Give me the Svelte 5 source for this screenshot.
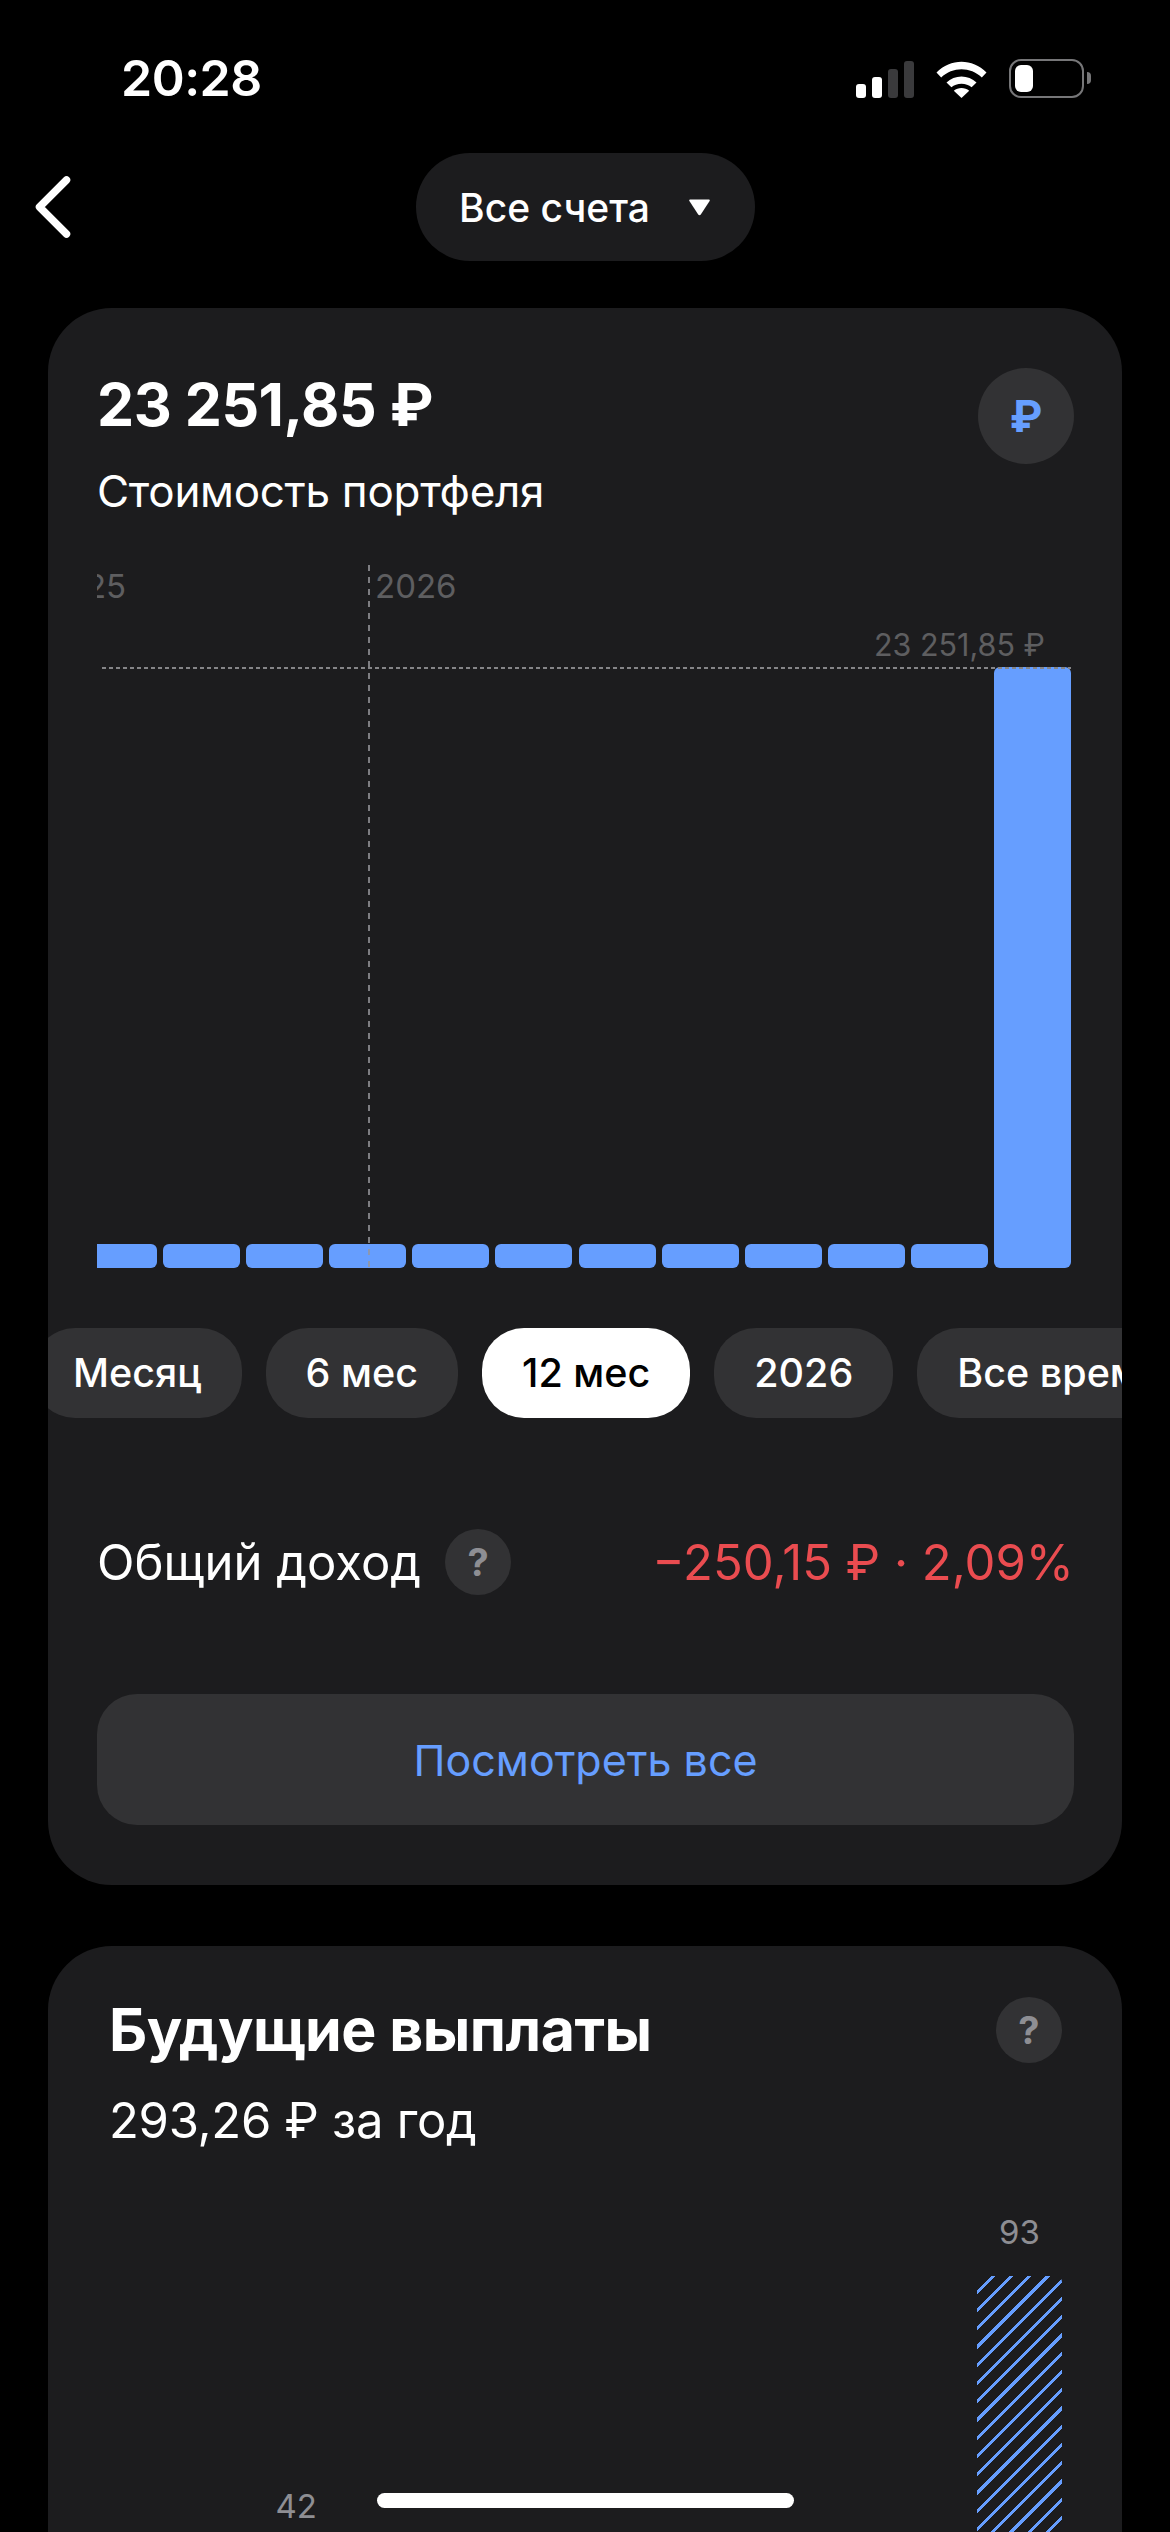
<script>
  const bars = [24, 24, 24, 24, 24, 24, 24, 24, 24, 24, 24, 601];
  const periods = ["Месяц", "6 мес", "12 мес", "2026", "Все время"];
  const activePeriod = "12 мес";
  const payouts = [null, 42, null, null, null, null, 93];
  const payoutScale = 5.37;
</script>

<div class="screen">
  <header class="status">
    <span class="time">20:28</span>
    <div class="status-icons">
      <div class="signal">
        <i class="on s1"></i>
        <i class="on s2"></i>
        <i class="s3"></i>
        <i class="s4"></i>
      </div>
      <svg class="wifi" width="51" height="37" viewBox="0 0 51 37" aria-hidden="true">
        <path d="M0.5 11.5C14.5 -3 36.5 -3 50.5 11.5L45.8 16.5C34.5 5.5 16.5 5.5 5.2 16.5Z" fill="#fff" />
        <path d="M10.5 21.5C18.5 13.5 32.5 13.5 40.5 21.5L35.6 26.3C30.5 21.5 20.5 21.5 15.4 26.3Z" fill="#fff" />
        <path d="M25.5 37L17.8 29.8C22 26 29 26 33.2 29.8Z" fill="#fff" />
      </svg>
      <div class="battery">
        <div class="battery-body"><div class="battery-fill"></div></div>
        <div class="battery-nub"></div>
      </div>
    </div>
  </header>

  <nav class="topbar">
    <svg class="back" width="36" height="62" viewBox="0 0 36 62" aria-hidden="true">
      <path d="M31.5 4L4.5 31L31.5 58" fill="none" stroke="#fff" stroke-width="7.5" stroke-linecap="round" stroke-linejoin="round" />
    </svg>
    <button class="accounts" type="button">
      <span>Все счета</span>
      <svg width="23" height="18" viewBox="0 0 23 18" aria-hidden="true">
        <path d="M2 1.5H21Q22.5 1.5 21.6 3L12.8 16.5Q11.5 18 10.2 16.5L1.4 3Q0.5 1.5 2 1.5Z" fill="#fff" />
      </svg>
    </button>
  </nav>

  <section class="card portfolio">
    <div class="portfolio-head">
      <div>
        <h1>23 251,85 ₽</h1>
        <p class="subtitle">Стоимость портфеля</p>
      </div>
      <div class="currency">₽</div>
    </div>

    <div class="chart">
      <span class="year old">2025</span>
      <span class="year current">2026</span>
      <span class="year-line"></span>
      <span class="max-label">23 251,85 ₽</span>
      <span class="max-line"></span>
      <div class="bars">
        {#each bars as height}
          <div class="bar" style="height: {height}px"></div>
        {/each}
      </div>
    </div>

    <div class="periods">
      <div class="period-row">
        {#each periods as period}
          <button class="chip" class:active={period === activePeriod} type="button">{period}</button>
        {/each}
      </div>
    </div>

    <div class="income">
      <div class="income-label">
        <span>Общий доход</span>
        <span class="help">?</span>
      </div>
      <span class="income-value">−250,15 ₽ · 2,09%</span>
    </div>

    <button class="view-all" type="button">Посмотреть все</button>
  </section>

  <section class="card future">
    <div class="future-head">
      <div>
        <h2>Будущие выплаты</h2>
        <p class="subtitle">293,26 ₽ за год</p>
      </div>
      <span class="help">?</span>
    </div>

    <div class="payouts">
      {#each payouts as value}
        <div class="payout">
          {#if value !== null}
            <span class="payout-value">{value}</span>
            <div class="hatch" style="height: {value * payoutScale}px"></div>
          {/if}
        </div>
      {/each}
    </div>
  </section>

  <div class="home-indicator"></div>
</div>

<style>
  :global(body) {
    margin: 0;
    background: #000;
  }

  .screen {
    position: relative;
    width: 1170px;
    height: 2532px;
    overflow: hidden;
    background: #000;
    color: #fff;
    font-family: Inter, "Noto Sans", sans-serif;
  }

  h1,
  h2,
  p {
    margin: 0;
  }

  button {
    border: 0;
    font: inherit;
    color: inherit;
    cursor: pointer;
  }

  .status {
    display: flex;
    justify-content: space-between;
    align-items: center;
    height: 58px;
    padding: 49px 79px 0 121px;
  }

  .time {
    font-size: 50px;
    font-weight: 600;
    letter-spacing: -0.5px;
  }

  .status-icons {
    display: flex;
    align-items: flex-end;
  }

  .signal {
    display: flex;
    align-items: flex-end;
    gap: 6px;
    height: 37px;
    margin-right: 22px;
  }

  .signal i {
    display: block;
    width: 10px;
    border-radius: 3px;
    background: #3a3a3c;
  }

  .signal i.on {
    background: #fff;
  }

  .s1 { height: 14px; }
  .s2 { height: 21px; }
  .s3 { height: 29px; }
  .s4 { height: 37px; }

  .wifi {
    margin-right: 22px;
  }

  .battery {
    display: flex;
    align-items: center;
    gap: 3px;
  }

  .battery-body {
    box-sizing: border-box;
    width: 75px;
    height: 39px;
    padding: 4px;
    border: 2.5px solid #767678;
    border-radius: 12px;
  }

  .battery-fill {
    width: 18px;
    height: 100%;
    border-radius: 6px;
    background: #fff;
  }

  .battery-nub {
    width: 4px;
    height: 12px;
    border-radius: 0 4px 4px 0;
    background: #767678;
  }

  .topbar {
    position: relative;
    display: flex;
    justify-content: center;
    margin-top: 46px;
  }

  .back {
    position: absolute;
    left: 35px;
    top: 23px;
  }

  .accounts {
    display: flex;
    align-items: center;
    gap: 38px;
    height: 108px;
    margin-left: 1px;
    padding: 0 44px 0 43px;
    border-radius: 54px;
    background: #1c1c1e;
    font-size: 39px;
    font-weight: 500;
  }

  .card {
    box-sizing: border-box;
    width: 1074px;
    margin: 0 48px;
    border-radius: 64px;
    background: #1c1c1e;
  }

  .portfolio {
    height: 1577px;
    margin-top: 47px;
    padding: 62px 48px 0 49px;
  }

  .portfolio-head,
  .future-head {
    display: flex;
    justify-content: space-between;
    align-items: flex-start;
  }

  h1 {
    font-size: 59px;
    line-height: 70px;
    font-weight: 700;
    letter-spacing: -0.5px;
  }

  .subtitle {
    margin-top: 25px;
    font-size: 44px;
    line-height: 52px;
    font-weight: 400;
    letter-spacing: -0.3px;
  }

  .portfolio-head .currency {
    margin-top: -2px;
  }

  .currency {
    display: flex;
    align-items: center;
    justify-content: center;
    width: 96px;
    height: 96px;
    border-radius: 50%;
    background: #323234;
    color: #669eff;
    font-size: 44px;
    font-weight: 700;
  }

  .chart {
    position: relative;
    height: 703px;
    margin-top: 48px;
    overflow: hidden;
  }

  .year {
    position: absolute;
    top: 1px;
    font-size: 33px;
    line-height: 40px;
    color: #5e5e60;
  }

  .year.old {
    left: -52px;
  }

  .year.current {
    left: 278px;
  }

  .year-line {
    position: absolute;
    left: 271px;
    top: 0;
    bottom: 0;
    z-index: 1;
    width: 2px;
    background: repeating-linear-gradient(180deg, rgba(150, 150, 155, 0.8) 0 6px, transparent 6px 12px);
  }

  .max-label {
    position: absolute;
    right: 29px;
    top: 61px;
    font-size: 30.5px;
    line-height: 38px;
    color: #5e5e60;
  }

  .max-line {
    position: absolute;
    left: 5px;
    right: 3px;
    top: 102px;
    z-index: 1;
    height: 2px;
    background: repeating-linear-gradient(90deg, #858588 0 4px, transparent 4px 7px);
  }

  .bars {
    position: absolute;
    left: -17px;
    bottom: 0;
    display: flex;
    align-items: flex-end;
    gap: 6.1px;
  }

  .bar {
    width: 77px;
    border-radius: 6px;
    background: #669eff;
  }

  .periods {
    margin: 60px -48px 0 -49px;
    overflow: hidden;
  }

  .period-row {
    display: flex;
    gap: 24px;
    margin-left: -15px;
  }

  .chip {
    flex: none;
    height: 90px;
    padding: 0 40px;
    border-radius: 42px;
    background: #323234;
    font-size: 39.5px;
    font-weight: 500;
    white-space: nowrap;
  }

  .chip.active {
    background: #fff;
    color: #000;
  }

  .income {
    display: flex;
    justify-content: space-between;
    align-items: center;
    margin-top: 111px;
    font-size: 49px;
  }

  .income-label {
    display: flex;
    align-items: center;
    gap: 24px;
  }

  .income-value {
    color: #ea4c50;
  }

  .help {
    display: flex;
    flex: none;
    align-items: center;
    justify-content: center;
    width: 66px;
    height: 66px;
    border-radius: 50%;
    background: #323234;
    color: #8e8e93;
    font-size: 38px;
    font-weight: 700;
  }

  .view-all {
    display: block;
    width: 100%;
    height: 131px;
    margin-top: 99px;
    border-radius: 40px;
    background: #323234;
    color: #669eff;
    font-size: 43px;
  }

  .future {
    height: 900px;
    margin-top: 61px;
    padding: 51px 60px 0 61px;
  }

  h2 {
    font-size: 59px;
    line-height: 66px;
    font-weight: 700;
    letter-spacing: -0.5px;
  }

  .future .subtitle {
    margin-top: 32px;
    font-size: 49px;
  }

  .payouts {
    display: grid;
    grid-template-columns: repeat(7, 85px);
    justify-content: space-between;
    align-items: end;
    margin-top: 67px;
  }

  .payout {
    display: flex;
    flex-direction: column;
    align-items: center;
    gap: 26px;
  }

  .payout-value {
    font-size: 33px;
    line-height: 36px;
    color: #8e8e93;
  }

  .hatch {
    width: 100%;
    border-radius: 6px;
    background: repeating-linear-gradient(-45deg, #669eff 0 3px, transparent 3px 12.9px);
  }

  .home-indicator {
    position: absolute;
    left: 377px;
    top: 2493px;
    width: 417px;
    height: 15px;
    border-radius: 8px;
    background: #fff;
  }
</style>
